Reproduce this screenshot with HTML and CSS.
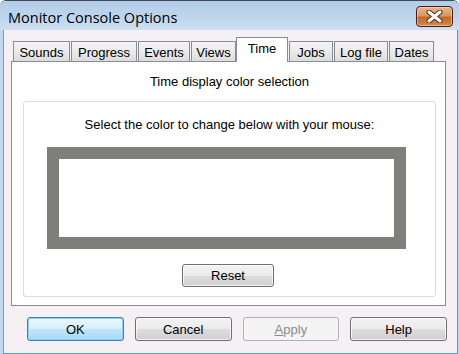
FILE: index.html
```html
<!DOCTYPE html>
<html lang="en">
<head>
    <meta charset="UTF-8">
    <title>Monitor Console Options</title>
    <link rel="stylesheet" href="styles.css">
</head>
<body>

<div class="window">
    <div class="titlebar">
        <span class="title">Monitor Console Options</span>
        <button class="close-btn" aria-label="Close">
            <svg width="17" height="13" viewBox="0 0 17 13">
                <path d="M3 2 L14 11 M14 2 L3 11" stroke="#5a2a18" stroke-width="5" stroke-linecap="round"/>
                <path d="M3 2 L14 11 M14 2 L3 11" stroke="#ffffff" stroke-width="3" stroke-linecap="round"/>
            </svg>
        </button>
    </div>

    <div class="client">
        <div class="tabs">
            <div class="tab tab-sounds">Sounds</div>
            <div class="tab tab-progress">Progress</div>
            <div class="tab tab-events">Events</div>
            <div class="tab tab-views">Views</div>
            <div class="tab tab-time active">Time</div>
            <div class="tab tab-jobs">Jobs</div>
            <div class="tab tab-log">Log file</div>
            <div class="tab tab-dates">Dates</div>
        </div>

        <div class="panel">
            <p class="panel-caption">Time display color selection</p>
            <div class="group">
                <p class="group-caption">Select the color to change below with your mouse:</p>
                <div class="color-box">
                    <div class="color-inner"></div>
                </div>
                <button class="btn reset-btn">Reset</button>
            </div>
        </div>

        <div class="actions">
            <button class="btn default-btn">OK</button>
            <button class="btn">Cancel</button>
            <button class="btn" disabled><u>A</u>pply</button>
            <button class="btn">Help</button>
        </div>
    </div>
</div>

</body>
</html>
```

FILE: styles.css
```css
body {
    margin: 0;
    font-family: "Liberation Sans", Arial, sans-serif;
    font-size: 13px;
    color: #000;
    background: #ffffff;
}
.window {
    width: 459px;
    height: 354px;
    display: flex;
    flex-direction: column;
    background: #c3d7ec;
    border-top: 1px solid #3f4b5c;
    border-radius: 6px 6px 0 0;
    box-sizing: border-box;
    overflow: hidden;
}
.titlebar {
    height: 29px;
    flex-shrink: 0;
    display: flex;
    align-items: center;
    justify-content: space-between;
    padding: 0 6px 0 8px;
    background: linear-gradient(#b3cce6, #bed5ec 55%, #cfe0f1);
}
.title {
    font-family: "Open Sans", "Noto Sans", sans-serif;
    font-size: 14.5px;
    color: #000;
    margin-top: 3px;
}
.close-btn {
    width: 37px;
    height: 21px;
    margin-top: 2px;
    padding: 0;
    border: 1px solid #4c1a12;
    border-radius: 4px;
    background: linear-gradient(#e6b792, #d8985e 45%, #bf6a26 55%, #d68a46);
    box-shadow: inset 0 0 0 1px rgba(255, 230, 200, 0.5);
    display: flex;
    align-items: center;
    justify-content: center;
}
.client {
    flex: 1;
    margin-left: 3px;
    margin-right: 1px;
    padding: 7px 10px 0 7px;
    background: #f4f0f4;
    border-left: 1px solid #8a96a6;
    border-right: 1px solid #3ba5d9;
    border-bottom: 1px solid #3ba5d9;
    box-sizing: border-box;
    display: flex;
    flex-direction: column;
}

/* tab strip */
.tabs {
    display: flex;
    align-items: flex-end;
    padding-left: 2px;
    height: 24px;
}
.tab {
    height: 20px;
    line-height: 21px;
    box-sizing: border-box;
    text-align: center;
    border: 1px solid #898c95;
    border-bottom: none;
    margin-right: 1px;
    background: linear-gradient(#f3f3f3, #ebebeb 50%, #dcdcdc);
    white-space: nowrap;
}
.tab-sounds { width: 57px; }
.tab-progress { width: 66px; }
.tab-events { width: 52px; }
.tab-views { width: 45px; }
.tab-time { width: 52px; }
.tab-jobs { width: 44px; }
.tab-log { width: 54px; }
.tab-dates { width: 45px; }
.tab.active {
    position: relative;
    z-index: 1;
    height: 25px;
    line-height: 21px;
    margin: 0 1px -1px -1px;
    background: #ffffff;
}

.panel {
    width: 435px;
    height: 245px;
    box-sizing: border-box;
    border: 1px solid #898c95;
    background: #ffffff;
    padding: 0 9px 0 11px;
}
.panel-caption {
    margin: 12px 0 0;
    text-align: center;
    line-height: 16px;
}
.group {
    margin-top: 11px;
    height: 196px;
    box-sizing: border-box;
    border: 1px solid #d5dfe5;
    border-radius: 3px;
    display: flex;
    flex-direction: column;
    align-items: center;
}
.group-caption {
    margin: 15px 0 0;
    line-height: 16px;
}
.color-box {
    align-self: flex-start;
    margin: 14px 0 0 23px;
    width: 359px;
    height: 102px;
    box-sizing: border-box;
    border: 12px solid #7f807c;
}
.color-inner {
    height: 100%;
    background: #ffffff;
}
.btn {
    font-family: "Liberation Sans", Arial, sans-serif;
    font-size: 13px;
    color: #000;
    width: 97px;
    height: 24px;
    padding: 0;
    border: 1px solid #707070;
    border-radius: 3px;
    background: linear-gradient(#f2f2f2, #ebebeb 50%, #dddddd 51%, #cfcfcf);
    box-shadow: inset 0 0 0 1px rgba(255, 255, 255, 0.7);
}
.btn:disabled {
    color: #8b8b8b;
    border-color: #adb2b5;
    background: #f4f4f4;
    box-shadow: none;
}
.reset-btn {
    width: 92px;
    height: 23px;
    margin-top: 15px;
    margin-left: -3px;
}
.default-btn {
    border-color: #3c7fb1;
    background: linear-gradient(#eaf6fd, #d9f0fc 50%, #bee6fd 51%, #a7d9f5);
    box-shadow: inset 0 0 0 1px #90d0f0;
}
.actions {
    display: flex;
    gap: 11px;
    margin-top: 11px;
    padding-left: 16px;
}
```
